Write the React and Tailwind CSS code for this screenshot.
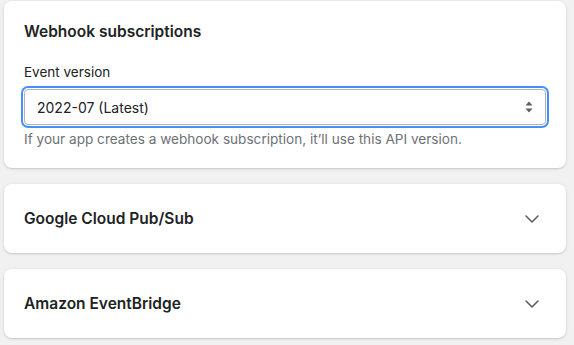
import { ChevronDown } from 'lucide-react';

function SelectArrows() {
  return (
    <svg width="8" height="12" viewBox="0 0 8 12" className="text-[#5c5f62]">
      <path d="M4 0.5 L7.5 4.5 H0.5 Z" fill="currentColor" />
      <path d="M4 11.5 L7.5 7.5 H0.5 Z" fill="currentColor" />
    </svg>
  );
}

function CollapsedCard({ title }) {
  return (
    <section className="flex h-[69px] items-center justify-between rounded-[8px] bg-white px-5 shadow-[0_0_5px_rgba(23,24,24,0.05),0_1px_2px_rgba(0,0,0,0.15)]">
      <h2 className="text-[15.5px] font-semibold text-[#202223]">{title}</h2>
      <ChevronDown size={24} strokeWidth={1.6} className="mr-[2px] text-[#5c5f62]" />
    </section>
  );
}

export default function App() {
  return (
    <div className="min-h-[345px] bg-[#f1f1f1] pl-[4px] pt-[1px] font-['Inter',sans-serif] antialiased">
      <div className="flex w-[562px] flex-col gap-4">
        <section className="rounded-[8px] bg-white px-5 pb-[19px] pt-[21px] shadow-[0_0_5px_rgba(23,24,24,0.05),0_1px_2px_rgba(0,0,0,0.15)]">
          <h2 className="text-[15.5px] leading-5 font-semibold text-[#202223]">Webhook subscriptions</h2>
          <label className="mt-[20px] block text-[13.5px] leading-5 text-[#202223]">Event version</label>
          <div className="mt-[7px] flex h-9 items-center justify-between rounded-[4px] border border-[#b0b3b6] bg-white pl-3 pr-3 outline-2 outline-offset-1 outline-[#458fff]">
            <span className="text-[14px] text-[#202223]">2022-07 (Latest)</span>
            <SelectArrows />
          </div>
          <p className="mt-[4px] text-[13.6px] leading-5 text-[#6d7175]">
            If your app creates a webhook subscription, it’ll use this API version.
          </p>
        </section>
        <CollapsedCard title="Google Cloud Pub/Sub" />
        <CollapsedCard title="Amazon EventBridge" />
      </div>
    </div>
  );
}
